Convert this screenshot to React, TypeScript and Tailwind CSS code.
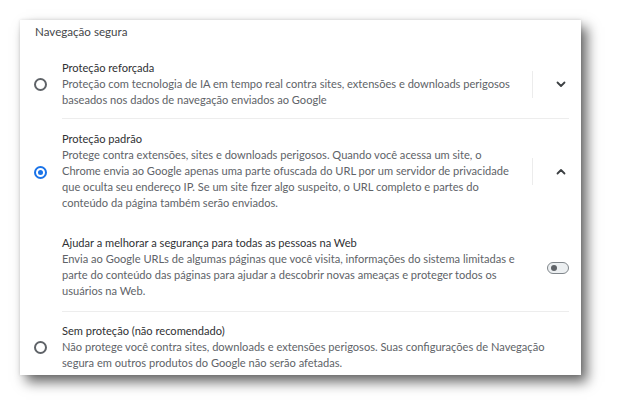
import React from "react";

const font = { fontFamily: 'Lato, "Noto Sans", sans-serif' };

function Radio({ checked }: { checked?: boolean }) {
  if (checked) {
    return (
      <div className="w-[13px] h-[13px] rounded-full border-[2px] border-[#1a73e8] flex items-center justify-center">
        <div className="w-[5px] h-[5px] rounded-full bg-[#1a73e8]" />
      </div>
    );
  }
  return <div className="w-[13px] h-[13px] rounded-full border-[2px] border-[#5f6368]" />;
}

function Chevron({ up }: { up?: boolean }) {
  return (
    <svg width="10" height="7" viewBox="0 0 10 7" className={up ? "rotate-180" : ""}>
      <path d="M1.5 1.5 L5 5 L8.5 1.5" fill="none" stroke="#3c4043" strokeWidth="1.8" strokeLinecap="round" strokeLinejoin="round" />
    </svg>
  );
}

function Lines({ title, lines }: { title: string; lines: string[] }) {
  return (
    <div className="flex flex-col text-[11.1px] leading-[16px] whitespace-nowrap">
      <div className="text-[#303134]">{title}</div>
      {lines.map((l, i) => (
        <div key={i} className="text-[#606368]">{l}</div>
      ))}
    </div>
  );
}

export default function App() {
  return (
    <div className="w-[622px] h-[417px] bg-white pt-[20px] pl-[20px]" style={font}>
      <div className="w-[561px] h-[355px] bg-white overflow-hidden shadow-[6px_7px_12px_rgba(0,0,0,0.6),0_0_3px_rgba(0,0,0,0.12)] flex flex-col">
        <div className="pl-[15px] pt-[4px] text-[11.6px] leading-[16px] text-[#45474a]">Navegação segura</div>

        {/* Row 1 */}
        <div className="mt-[20px] flex items-center">
          <div className="w-[42px] shrink-0 pl-[14px]">
            <Radio />
          </div>
          <div className="w-[470px] shrink-0">
            <Lines
              title="Proteção reforçada"
              lines={[
                "Proteção com tecnologia de IA em tempo real contra sites, extensões e downloads perigosos",
                "baseados nos dados de navegação enviados ao Google",
              ]}
            />
          </div>
          <div className="w-px h-[27px] shrink-0 bg-[#ececec]" />
          <div className="w-[48px] shrink-0 pl-[23px] flex items-center">
            <Chevron />
          </div>
        </div>
        <div className="ml-[42px] mr-[12px] mt-[10px] h-px bg-[#ededed]" />

        {/* Row 2 */}
        <div className="mt-[12px] flex items-center">
          <div className="w-[42px] shrink-0 pl-[14px] mt-[2px]">
            <Radio checked />
          </div>
          <div className="w-[470px] shrink-0">
            <Lines
              title="Proteção padrão"
              lines={[
                "Protege contra extensões, sites e downloads perigosos. Quando você acessa um site, o",
                "Chrome envia ao Google apenas uma parte ofuscada do URL por um servidor de privacidade",
                "que oculta seu endereço IP. Se um site fizer algo suspeito, o URL completo e partes do",
                "conteúdo da página também serão enviados.",
              ]}
            />
          </div>
          <div className="w-px h-[27px] shrink-0 bg-[#ececec]" />
          <div className="w-[48px] shrink-0 pl-[23px] flex items-center">
            <Chevron up />
          </div>
        </div>

        {/* Row 3 */}
        <div className="mt-[24px] flex items-center">
          <div className="w-[42px] shrink-0" />
          <div className="flex-1 min-w-0">
            <Lines
              title="Ajudar a melhorar a segurança para todas as pessoas na Web"
              lines={[
                "Envia ao Google URLs de algumas páginas que você visita, informações do sistema limitadas e",
                "parte do conteúdo das páginas para ajudar a descobrir novas ameaças e proteger todos os",
                "usuários na Web.",
              ]}
            />
          </div>
          <div className="w-[22px] h-[12px] shrink-0 rounded-full border-[1.5px] border-[#80868b] bg-[#eceff1] flex items-center pl-[2.5px] mr-[12px] mt-[2px]">
            <div className="w-[6px] h-[6px] rounded-full bg-[#5f6368]" />
          </div>
        </div>
        <div className="ml-[42px] mr-[12px] mt-[12px] h-px bg-[#ededed]" />

        {/* Row 4 */}
        <div className="mt-[11px] flex items-start">
          <div className="w-[42px] shrink-0 pl-[14px] mt-[18px]">
            <Radio />
          </div>
          <div className="flex-1 min-w-0">
            <Lines
              title="Sem proteção (não recomendado)"
              lines={[
                "Não protege você contra sites, downloads e extensões perigosos. Suas configurações de Navegação",
                "segura em outros produtos do Google não serão afetadas.",
              ]}
            />
          </div>
        </div>
      </div>
    </div>
  );
}
